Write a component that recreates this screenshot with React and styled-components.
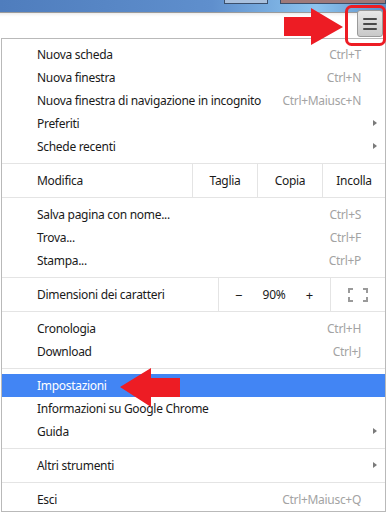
import styled, { createGlobalStyle } from "styled-components";

const Global = createGlobalStyle`
  html, body {
    margin: 0;
    padding: 0;
    background: #ffffff;
  }
  body {
    font-family: "Noto Sans", "Open Sans", sans-serif;
    font-size: 12px;
    letter-spacing: -0.3px;
    color: #1a1a1a;
  }
`;

const Page = styled.div`
  position: relative;
  width: 386px;
  height: 522px;
  overflow: hidden;
  background: #ffffff;
`;

const TitleBar = styled.div`
  height: 12px;
  background: linear-gradient(90deg, #4f7dbd 0%, #5f8fcd 55%, #8cc4ee 82%, #5d8fc8 100%);
  display: flex;
  justify-content: flex-end;
  align-items: flex-start;
  gap: 12px;
`;

const WinButton = styled.div`
  width: ${(p) => p.$w}px;
  height: 3px;
  border: 1px solid #3b4f6b;
  border-top: none;
  background: ${(p) => p.$bg};
`;

const Toolbar = styled.div`
  height: 25px;
  border-top: 1px solid #9b9b9b;
  background: linear-gradient(#ececec 0px, #f8f8f8 2px, #ffffff 4px);
  display: flex;
  justify-content: flex-end;
  align-items: flex-start;
  padding-right: 3px;
`;

const MenuButton = styled.div`
  width: 26px;
  height: 27px;
  margin-top: -3px;
  box-sizing: border-box;
  border: 1px solid #9a9a9a;
  border-radius: 3px;
  background: linear-gradient(#e8e8e8, #c9c9c9);
  display: flex;
  flex-direction: column;
  justify-content: center;
  align-items: center;
  gap: 3px;
`;

const Bar = styled.span`
  display: block;
  width: 14px;
  height: 2px;
  border-radius: 1px;
  background: #4a4a4a;
`;

const Menu = styled.div`
  margin-left: 1px;
  width: 385px;
  box-sizing: border-box;
  border: 1px solid #b9b9b9;
  background: #ffffff;
  padding: 4px 0 0;
`;

const Item = styled.div`
  height: 23px;
  display: flex;
  align-items: center;
  padding: 0 24px 0 35px;
  position: relative;
  background: ${(p) => (p.$active ? "#4285f4" : "transparent")};
  color: ${(p) => (p.$active ? "#ffffff" : "#1a1a1a")};
`;

const Label = styled.span`
  flex: 1;
  white-space: nowrap;
`;

const Shortcut = styled.span`
  color: #a3a3a3;
  white-space: nowrap;
`;

const SubArrow = styled.span`
  position: absolute;
  right: 8px;
  top: 8px;
  width: 0;
  height: 0;
  border-top: 3.5px solid transparent;
  border-bottom: 3.5px solid transparent;
  border-left: 4px solid #7a7a7a;
`;

const Separator = styled.div`
  height: 1px;
  margin: 5px 0;
  background: #e4e4e4;
`;

const Band = styled.div`
  height: 33px;
  margin: 5px 0;
  border-top: 1px solid #e4e4e4;
  border-bottom: 1px solid #e4e4e4;
  display: flex;
  align-items: stretch;
`;

const BandLabel = styled.div`
  flex: 1;
  display: flex;
  align-items: center;
  padding-left: 35px;
  white-space: nowrap;
`;

const Cell = styled.div`
  width: ${(p) => p.$w}px;
  border-left: 1px solid #e4e4e4;
  display: flex;
  align-items: center;
  justify-content: ${(p) => p.$justify || "center"};
  padding: ${(p) => p.$pad || "0"};
  box-sizing: border-box;
`;

const ZoomSign = styled.span`
  font-size: 13px;
`;

const Overlay = styled.svg`
  position: absolute;
  left: 0;
  top: 0;
  pointer-events: none;
`;

function FullscreenIcon() {
  return (
    <svg width="20" height="14" viewBox="0 0 20 14">
      <g fill="none" stroke="#9a9a9a" strokeWidth="2">
        <path d="M1 5V1h4" />
        <path d="M15 1h4v4" />
        <path d="M19 9v4h-4" />
        <path d="M5 13H1V9" />
      </g>
    </svg>
  );
}

export default function App() {
  return (
    <>
      <Global />
      <Page>
        <TitleBar>
          <WinButton $w={42} $bg="#a9c1de" />
          <WinButton $w={104} $bg="#9e7a7a" />
        </TitleBar>
        <Toolbar>
          <MenuButton>
            <Bar />
            <Bar />
            <Bar />
          </MenuButton>
        </Toolbar>
        <Menu>
          <Item>
            <Label>Nuova scheda</Label>
            <Shortcut>Ctrl+T</Shortcut>
          </Item>
          <Item>
            <Label>Nuova finestra</Label>
            <Shortcut>Ctrl+N</Shortcut>
          </Item>
          <Item>
            <Label>Nuova finestra di navigazione in incognito</Label>
            <Shortcut>Ctrl+Maiusc+N</Shortcut>
          </Item>
          <Item>
            <Label>Preferiti</Label>
            <SubArrow />
          </Item>
          <Item>
            <Label>Schede recenti</Label>
            <SubArrow />
          </Item>
          <Band>
            <BandLabel>Modifica</BandLabel>
            <Cell $w={65}>Taglia</Cell>
            <Cell $w={65}>Copia</Cell>
            <Cell $w={63}>Incolla</Cell>
          </Band>
          <Item>
            <Label>Salva pagina con nome...</Label>
            <Shortcut>Ctrl+S</Shortcut>
          </Item>
          <Item>
            <Label>Trova...</Label>
            <Shortcut>Ctrl+F</Shortcut>
          </Item>
          <Item>
            <Label>Stampa...</Label>
            <Shortcut>Ctrl+P</Shortcut>
          </Item>
          <Band>
            <BandLabel>Dimensioni dei caratteri</BandLabel>
            <Cell $w={112} $justify="space-between" $pad="0 17px 0 16px">
              <ZoomSign>−</ZoomSign>
              <span>90%</span>
              <ZoomSign>+</ZoomSign>
            </Cell>
            <Cell $w={55}>
              <FullscreenIcon />
            </Cell>
          </Band>
          <Item>
            <Label>Cronologia</Label>
            <Shortcut>Ctrl+H</Shortcut>
          </Item>
          <Item>
            <Label>Download</Label>
            <Shortcut>Ctrl+J</Shortcut>
          </Item>
          <Separator />
          <Item $active>
            <Label>Impostazioni</Label>
          </Item>
          <Item>
            <Label>Informazioni su Google Chrome</Label>
          </Item>
          <Item>
            <Label>Guida</Label>
            <SubArrow />
          </Item>
          <Separator />
          <Item>
            <Label>Altri strumenti</Label>
            <SubArrow />
          </Item>
          <Separator />
          <Item>
            <Label>Esci</Label>
            <Shortcut>Ctrl+Maiusc+Q</Shortcut>
          </Item>
        </Menu>
        <Overlay width="386" height="522" viewBox="0 0 386 522">
          <rect x="346.5" y="6.5" width="38" height="38" rx="5" fill="none" stroke="#ed1c24" strokeWidth="3" />
          <polygon points="284,17 311,17 311,8 343,27 311,45 311,36 284,36" fill="#ed1c24" />
          <polygon points="180,378 151,378 151,368 120,387 151,407 151,397 180,397" fill="#ed1c24" />
        </Overlay>
      </Page>
    </>
  );
}
